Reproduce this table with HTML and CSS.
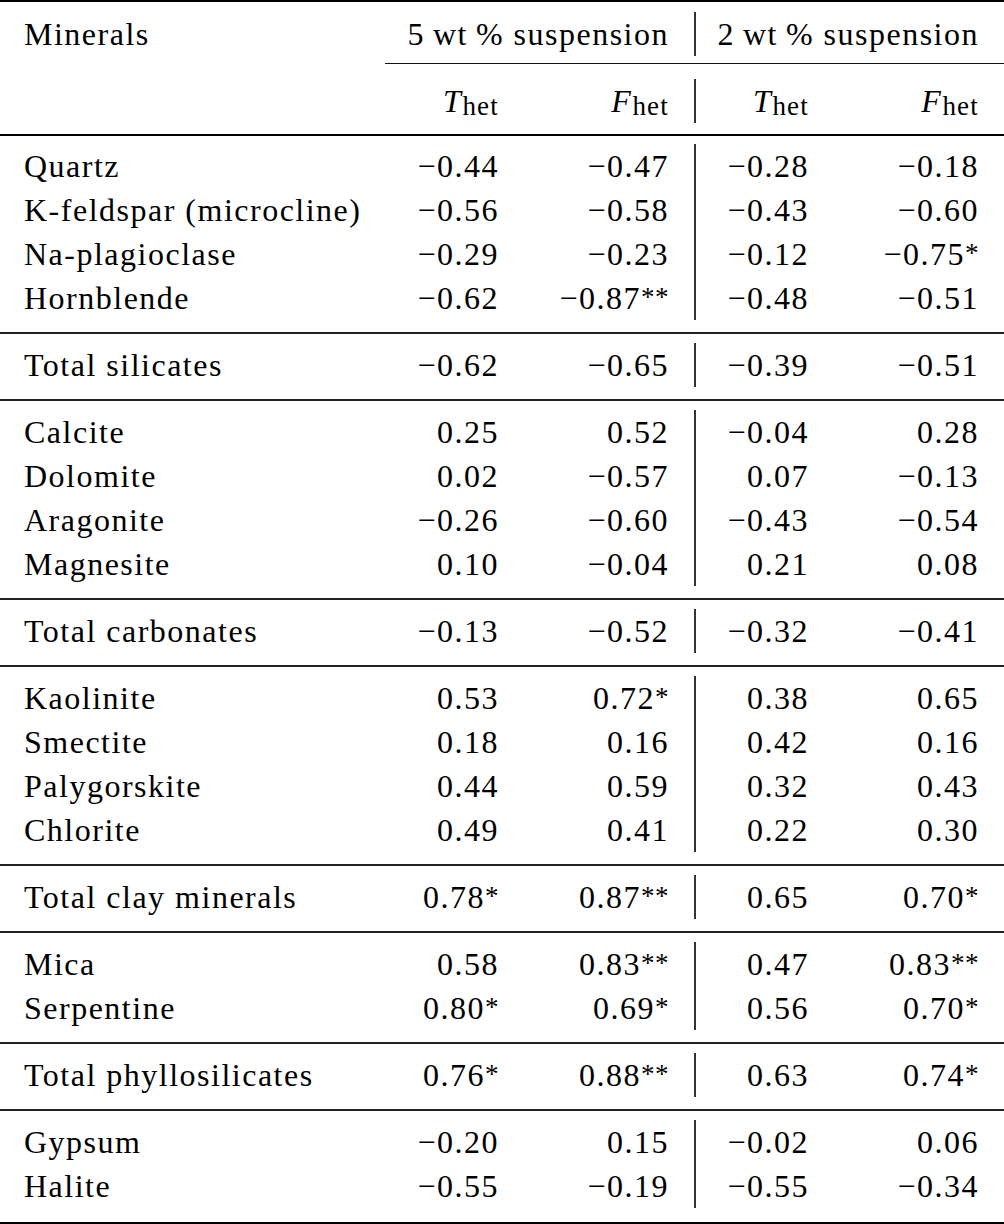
FILE: index.html
```html
<!DOCTYPE html>
<html lang="en">
<head>
<meta charset="utf-8">
<title>Minerals correlation table</title>
<link rel="stylesheet" href="styles.css">
</head>
<body>
<div class="tbl">
  <div class="head">
    <div class="hrow1">
      <div class="lab hcell">Minerals</div>
      <div class="grp g1"><div class="gin">5&thinsp;wt&thinsp;% suspension</div></div>
      <div class="grp g2"><div class="gin sep">2&thinsp;wt&thinsp;% suspension</div></div>
    </div>
    <div class="row hrow2">
      <div class="lab"></div>
      <div class="c c1"><i>T</i><span class="sb">het</span></div>
      <div class="c c2"><i>F</i><span class="sb">het</span></div>
      <div class="c c3"><i>T</i><span class="sb">het</span></div>
      <div class="c c4"><i>F</i><span class="sb">het</span></div>
    </div>
  </div>

  <div class="block first">
    <div class="row"><div class="lab">Quartz</div><div class="c c1">−0.44</div><div class="c c2">−0.47</div><div class="c c3">−0.28</div><div class="c c4">−0.18</div></div>
    <div class="row"><div class="lab">K-feldspar (microcline)</div><div class="c c1">−0.56</div><div class="c c2">−0.58</div><div class="c c3">−0.43</div><div class="c c4">−0.60</div></div>
    <div class="row"><div class="lab">Na-plagioclase</div><div class="c c1">−0.29</div><div class="c c2">−0.23</div><div class="c c3">−0.12</div><div class="c c4">−0.75<span class="st">*</span></div></div>
    <div class="row"><div class="lab">Hornblende</div><div class="c c1">−0.62</div><div class="c c2">−0.87<span class="st">**</span></div><div class="c c3">−0.48</div><div class="c c4">−0.51</div></div>
  </div>

  <div class="block">
    <div class="row"><div class="lab">Total silicates</div><div class="c c1">−0.62</div><div class="c c2">−0.65</div><div class="c c3">−0.39</div><div class="c c4">−0.51</div></div>
  </div>

  <div class="block">
    <div class="row"><div class="lab">Calcite</div><div class="c c1">0.25</div><div class="c c2">0.52</div><div class="c c3">−0.04</div><div class="c c4">0.28</div></div>
    <div class="row"><div class="lab">Dolomite</div><div class="c c1">0.02</div><div class="c c2">−0.57</div><div class="c c3">0.07</div><div class="c c4">−0.13</div></div>
    <div class="row"><div class="lab">Aragonite</div><div class="c c1">−0.26</div><div class="c c2">−0.60</div><div class="c c3">−0.43</div><div class="c c4">−0.54</div></div>
    <div class="row"><div class="lab">Magnesite</div><div class="c c1">0.10</div><div class="c c2">−0.04</div><div class="c c3">0.21</div><div class="c c4">0.08</div></div>
  </div>

  <div class="block">
    <div class="row"><div class="lab">Total carbonates</div><div class="c c1">−0.13</div><div class="c c2">−0.52</div><div class="c c3">−0.32</div><div class="c c4">−0.41</div></div>
  </div>

  <div class="block">
    <div class="row"><div class="lab">Kaolinite</div><div class="c c1">0.53</div><div class="c c2">0.72<span class="st">*</span></div><div class="c c3">0.38</div><div class="c c4">0.65</div></div>
    <div class="row"><div class="lab">Smectite</div><div class="c c1">0.18</div><div class="c c2">0.16</div><div class="c c3">0.42</div><div class="c c4">0.16</div></div>
    <div class="row"><div class="lab">Palygorskite</div><div class="c c1">0.44</div><div class="c c2">0.59</div><div class="c c3">0.32</div><div class="c c4">0.43</div></div>
    <div class="row"><div class="lab">Chlorite</div><div class="c c1">0.49</div><div class="c c2">0.41</div><div class="c c3">0.22</div><div class="c c4">0.30</div></div>
  </div>

  <div class="block">
    <div class="row"><div class="lab">Total clay minerals</div><div class="c c1">0.78<span class="st">*</span></div><div class="c c2">0.87<span class="st">**</span></div><div class="c c3">0.65</div><div class="c c4">0.70<span class="st">*</span></div></div>
  </div>

  <div class="block">
    <div class="row"><div class="lab">Mica</div><div class="c c1">0.58</div><div class="c c2">0.83<span class="st">**</span></div><div class="c c3">0.47</div><div class="c c4">0.83<span class="st">**</span></div></div>
    <div class="row"><div class="lab">Serpentine</div><div class="c c1">0.80<span class="st">*</span></div><div class="c c2">0.69<span class="st">*</span></div><div class="c c3">0.56</div><div class="c c4">0.70<span class="st">*</span></div></div>
  </div>

  <div class="block">
    <div class="row"><div class="lab">Total phyllosilicates</div><div class="c c1">0.76<span class="st">*</span></div><div class="c c2">0.88<span class="st">**</span></div><div class="c c3">0.63</div><div class="c c4">0.74<span class="st">*</span></div></div>
  </div>

  <div class="block last">
    <div class="row"><div class="lab">Gypsum</div><div class="c c1">−0.20</div><div class="c c2">0.15</div><div class="c c3">−0.02</div><div class="c c4">0.06</div></div>
    <div class="row"><div class="lab">Halite</div><div class="c c1">−0.55</div><div class="c c2">−0.19</div><div class="c c3">−0.55</div><div class="c c4">−0.34</div></div>
  </div>
</div>
</body>
</html>
```

FILE: styles.css
```css
html, body {
  margin: 0;
  padding: 0;
  background: #ffffff;
}

.tbl {
  width: 1004px;
  font-family: "Liberation Serif", "Times New Roman", serif;
  font-size: 32px;
  letter-spacing: 1.5px;
  line-height: 44px;
  color: #000;
  border-top: 2px solid #000;
  border-bottom: 2px solid #000;
}

.head {
  border-bottom: 2px solid #000;
}

.hrow1,
.row {
  display: grid;
  grid-template-columns: 385px 113px 197px 113px 196px;
}

.lab {
  padding-left: 24px;
  white-space: nowrap;
}

.hcell {
  padding-top: 10px;
}

.grp {
  padding-top: 10px;
  padding-bottom: 7px;
  border-bottom: 1px solid #111;
  text-align: right;
  white-space: nowrap;
}

.g1 {
  grid-column: 2 / 4;
  padding-right: 26px;
}

.g2 {
  grid-column: 4 / 6;
  padding-right: 25px;
}

.gin {
  height: 44px;
}

.sep {
  border-left: 2px solid #333;
  margin-left: -1px;
}

.hrow2 {
  padding-top: 15px;
  padding-bottom: 11px;
}

.c {
  text-align: right;
  white-space: nowrap;
}

.c1 {
  margin-right: -1px;
}

.c2 {
  padding-right: 26px;
}

.c3 {
  border-left: 2px solid #333;
  margin-left: -1px;
  margin-right: -1px;
}

.c4 {
  padding-right: 25px;
}

.sb {
  font-size: 27px;
  line-height: 0;
  vertical-align: -3px;
  letter-spacing: 1.2px;
}

.st {
  font-size: 27px;
  line-height: 0;
  vertical-align: 3px;
  letter-spacing: 0.5px;
}

.block {
  padding-top: 9px;
  padding-bottom: 12px;
  border-bottom: 2px solid #222;
}

.block.first {
  padding-top: 8px;
}

.block.last {
  padding-bottom: 14px;
  border-bottom: none;
}
```
